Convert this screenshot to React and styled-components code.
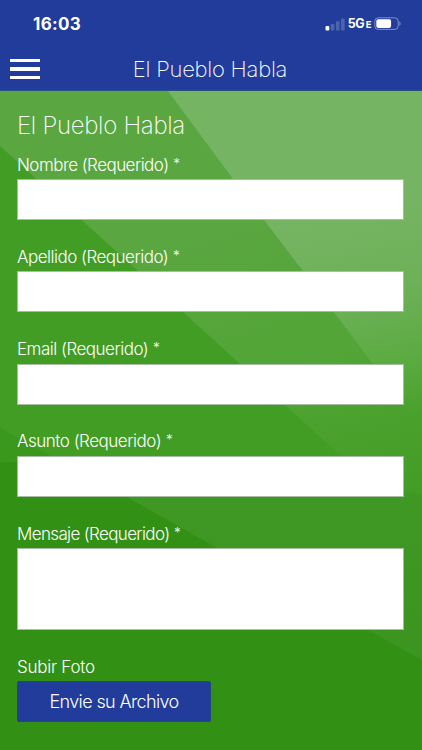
import React from "react";
import styled, { createGlobalStyle } from "styled-components";

const GlobalStyle = createGlobalStyle`
  * { box-sizing: border-box; }
  body { margin: 0; background: #329114; font-family: Inter, "Liberation Sans", sans-serif; }
`;

const Screen = styled.div`
  position: relative;
  display: flex;
  flex-direction: column;
  width: 422px;
  height: 750px;
  overflow: hidden;
  color: #fff;
`;

const Header = styled.header`
  height: 91px;
  background: #213c9a;
  border-bottom: 1px solid #28527f;
`;

const StatusBar = styled.div`
  display: flex;
  align-items: center;
  justify-content: space-between;
  height: 48px;
  padding: 0 20px 0 33px;
`;

const Clock = styled.time`
  font-size: 17px;
  font-weight: 700;
  letter-spacing: 0.3px;
`;

const Signals = styled.div`
  display: flex;
  align-items: center;
`;

const Network = styled.span`
  margin: 1px 3px 0 3px;
  font-size: 12.5px;
  line-height: 14px;
  font-weight: 700;
  letter-spacing: -0.5px;
  small { margin-left: 1.5px; font-size: 9.5px; }
`;

const NavBar = styled.nav`
  display: grid;
  grid-template-columns: 60px 1fr 62px;
  align-items: center;
  height: 42px;
`;

const MenuButton = styled.button`
  display: flex;
  flex-direction: column;
  gap: 5px;
  width: 30px;
  margin-left: 10px;
  padding: 0;
  border: 0;
  background: none;
`;

const MenuLine = styled.span`
  height: 3.4px;
  background: #fff;
`;

const NavTitle = styled.div`
  text-align: center;
  font-size: 22px;
  line-height: 42px;
  font-weight: 200;
  letter-spacing: -0.25px;
  white-space: nowrap;
`;

const Main = styled.main`
  position: relative;
  flex: 1;
`;

const Backdrop = styled.svg`
  position: absolute;
  inset: 0;
`;

const Form = styled.form`
  position: relative;
  display: flex;
  flex-direction: column;
  padding: 17.8px 18px 0 17px;
`;

const Heading = styled.h1`
  margin: 0;
  height: 32px;
  font-size: 24px;
  line-height: 33px;
  font-weight: 200;
  letter-spacing: -0.3px;
`;

const Field = styled.div`
  display: flex;
  flex-direction: column;
  height: ${(p) => p.$height || 92.2}px;
`;

const Label = styled.label`
  height: 38.4px;
  padding-top: 12px;
  font-size: 17px;
  line-height: 24px;
  font-weight: 300;
  letter-spacing: ${(p) => p.$spacing}px;
  white-space: nowrap;
`;

const Star = styled.span`
  margin-left: 0.5px;
  font-size: 13.5px;
  line-height: 1;
  vertical-align: 3px;
`;

const Input = styled.input`
  width: 387px;
  height: 41px;
  border: 1px solid #a9bda4;
  border-radius: 0;
  background: #fff;
  outline: none;
`;

const TextArea = styled(Input).attrs({ as: "textarea" })`
  height: 82px;
  resize: none;
`;

const UploadButton = styled.button`
  width: 194px;
  height: 41px;
  padding: 1px 0 0;
  border: 1px solid #24487c;
  border-radius: 2px;
  background: #213c9a;
  color: #fff;
  font: 300 18px/38px Inter, sans-serif;
  letter-spacing: -0.63px;
`;

const FIELDS = [
  { id: "nombre", label: "Nombre (Requerido)", spacing: -0.54 },
  { id: "apellido", label: "Apellido (Requerido)", spacing: -0.5 },
  { id: "email", label: "Email (Requerido)", spacing: -0.5 },
  { id: "asunto", label: "Asunto (Requerido)", spacing: -0.48 },
];

function SignalIcon() {
  return (
    <svg width="20" height="16" viewBox="0 0 20 16" fill="#fff">
      <rect x="0.5" y="9.9" width="3.8" height="4.5" rx="1" />
      <rect x="5.7" y="7.9" width="3.7" height="6.5" rx="1" opacity=".2" />
      <rect x="10.9" y="5.2" width="3.7" height="9.2" rx="1" opacity=".2" />
      <rect x="16" y="2.4" width="3.7" height="12" rx="1" opacity=".2" />
    </svg>
  );
}

function BatteryIcon() {
  return (
    <svg width="28" height="14" viewBox="0 0 28 14">
      <rect x="0.8" y="0.8" width="23.4" height="11.6" rx="3.4" fill="none" stroke="#fff" strokeOpacity=".42" />
      <rect x="2.3" y="2.3" width="14.8" height="8.6" rx="1.8" fill="#fff" />
      <path d="M25.4 4.5c1.6.5 1.6 3.8 0 4.3z" fill="#fff" opacity=".45" />
    </svg>
  );
}

function BackdropArt() {
  return (
    <Backdrop width="422" height="659" viewBox="0 91 422 659">
      <defs>
        <linearGradient id="band" gradientUnits="userSpaceOnUse" x1="250" y1="220" x2="330" y2="515">
          <stop offset="0" stopColor="#5aa640" />
          <stop offset=".5" stopColor="#52a536" />
          <stop offset="1" stopColor="#429d24" />
        </linearGradient>
        <linearGradient id="light" gradientUnits="userSpaceOnUse" x1="330" y1="220" x2="375" y2="430">
          <stop offset="0" stopColor="#75b462" />
          <stop offset=".4" stopColor="#6cb056" />
          <stop offset=".7" stopColor="#5cab42" />
          <stop offset="1" stopColor="#46a029" />
        </linearGradient>
        <linearGradient id="shade" gradientUnits="userSpaceOnUse" x1="0" y1="475" x2="0" y2="650">
          <stop offset="0" stopColor="#409825" />
          <stop offset="1" stopColor="#3c9520" />
        </linearGradient>
      </defs>
      <path d="M0 91H422V750H0z" fill="#429d24" />
      <path d="M0 91H422V526L340 455 239 363 138 271 0 146z" fill="url(#band)" />
      <path d="M168 91H422V430L334 312 233 179z" fill="url(#light)" />
      <path d="M0 428L60 461 0 462z" fill="#3a981d" />
      <path d="M0 462H60L422 494V750H0z" fill="url(#shade)" />
      <path d="M0 462H62L127 497 217 548 370 631 422 660V750H0z" fill="#329114" />
    </Backdrop>
  );
}

export default function App() {
  return (
    <Screen>
      <GlobalStyle />
      <Header>
        <StatusBar>
          <Clock>16:03</Clock>
          <Signals>
            <SignalIcon />
            <Network>5G<small>E</small></Network>
            <BatteryIcon />
          </Signals>
        </StatusBar>
        <NavBar>
          <MenuButton type="button" aria-label="Menú">
            <MenuLine />
            <MenuLine />
            <MenuLine />
          </MenuButton>
          <NavTitle>El Pueblo Habla</NavTitle>
        </NavBar>
      </Header>
      <Main>
        <BackdropArt />
        <Form>
          <Heading>El Pueblo Habla</Heading>
          {FIELDS.map((f) => (
            <Field key={f.id}>
              <Label htmlFor={f.id} $spacing={f.spacing}>{f.label} <Star>*</Star></Label>
              <Input id={f.id} />
            </Field>
          ))}
          <Field $height={133}>
            <Label htmlFor="mensaje" $spacing={-0.64}>Mensaje (Requerido) <Star>*</Star></Label>
            <TextArea id="mensaje" />
          </Field>
          <Field>
            <Label as="span" $spacing={-0.25}>Subir Foto</Label>
            <UploadButton type="button">Envie su Archivo</UploadButton>
          </Field>
        </Form>
      </Main>
    </Screen>
  );
}
